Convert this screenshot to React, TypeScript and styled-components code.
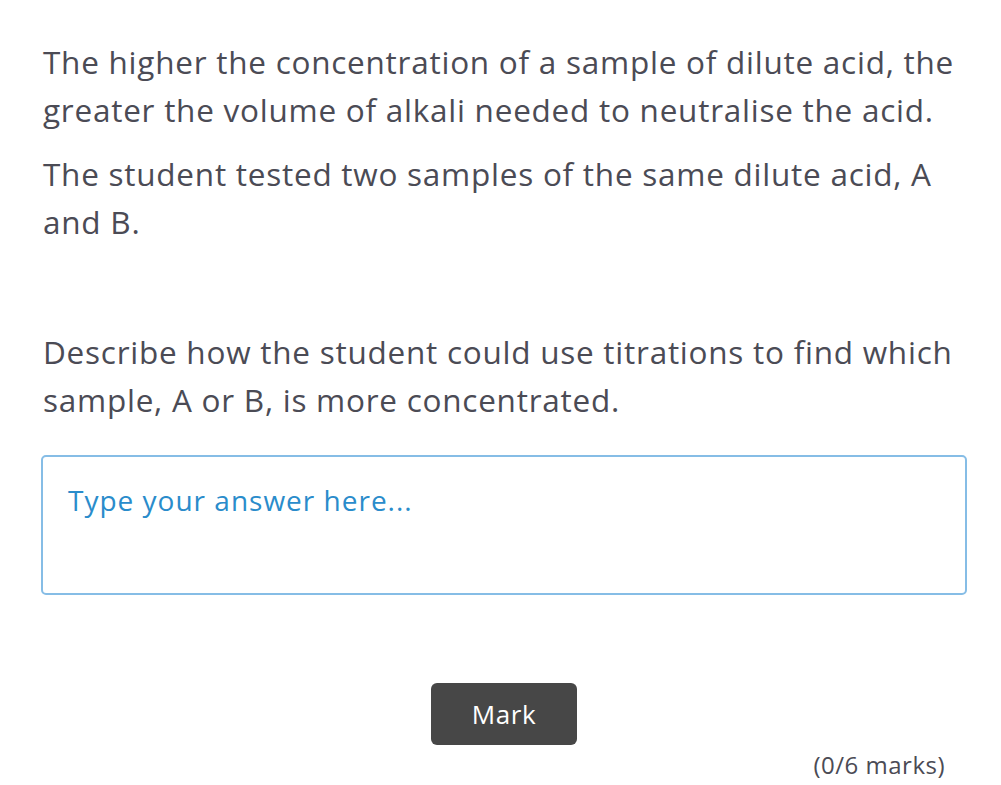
import React from 'react'
import styled, { createGlobalStyle } from 'styled-components'

const GlobalStyle = createGlobalStyle`
  html, body {
    margin: 0;
    padding: 0;
    background: #fff;
  }
`

const Page = styled.div`
  box-sizing: border-box;
  width: 1001px;
  padding: 38px 34px 0 43px;
  font-family: 'Open Sans', 'Noto Sans', sans-serif;
  color: #4b4b55;
`

const Para = styled.p<{ $gap?: number }>`
  margin: 0 0 ${(p) => p.$gap ?? 16}px;
  font-size: 31.5px;
  letter-spacing: 0.75px;
  line-height: 48px;
`

const AnswerBox = styled.textarea`
  display: block;
  box-sizing: border-box;
  width: 926px;
  height: 140px;
  margin: 31px 0 0 -2px;
  padding: 25px 25px;
  border: 2px solid #86bde6;
  border-radius: 5px;
  resize: none;
  outline: none;
  font-family: inherit;
  font-size: 28px;
  letter-spacing: 1px;
  line-height: 36px;
  color: #4b4b55;

  &::placeholder {
    color: #2a8ccb;
    opacity: 1;
  }
`

const Footer = styled.div`
  display: flex;
  flex-direction: column;
  align-items: center;
  padding-top: 88px;
  width: 922px;
`

const MarkButton = styled.button`
  width: 146px;
  height: 62px;
  border: none;
  border-radius: 6px;
  background: #474747;
  color: #fff;
  font-family: inherit;
  font-size: 26px;
  letter-spacing: 0.6px;
  cursor: pointer;
`

const Score = styled.div`
  align-self: flex-end;
  margin: 4px 20px 0 0;
  font-size: 24px;
  letter-spacing: 0.5px;
  line-height: 32px;
`

export default function App() {
  return (
    <>
      <GlobalStyle />
      <Page>
        <Para>
          The higher the concentration of a sample of dilute acid, the greater the volume of
          alkali needed to neutralise the acid.
        </Para>
        <Para $gap={82}>The student tested two samples of the same dilute acid, A and B.</Para>
        <Para $gap={0}>
          Describe how the student could use titrations to find which sample, A or B, is more
          concentrated.
        </Para>
        <AnswerBox placeholder="Type your answer here..." />
        <Footer>
          <MarkButton>Mark</MarkButton>
          <Score>(0/6 marks)</Score>
        </Footer>
      </Page>
    </>
  )
}
